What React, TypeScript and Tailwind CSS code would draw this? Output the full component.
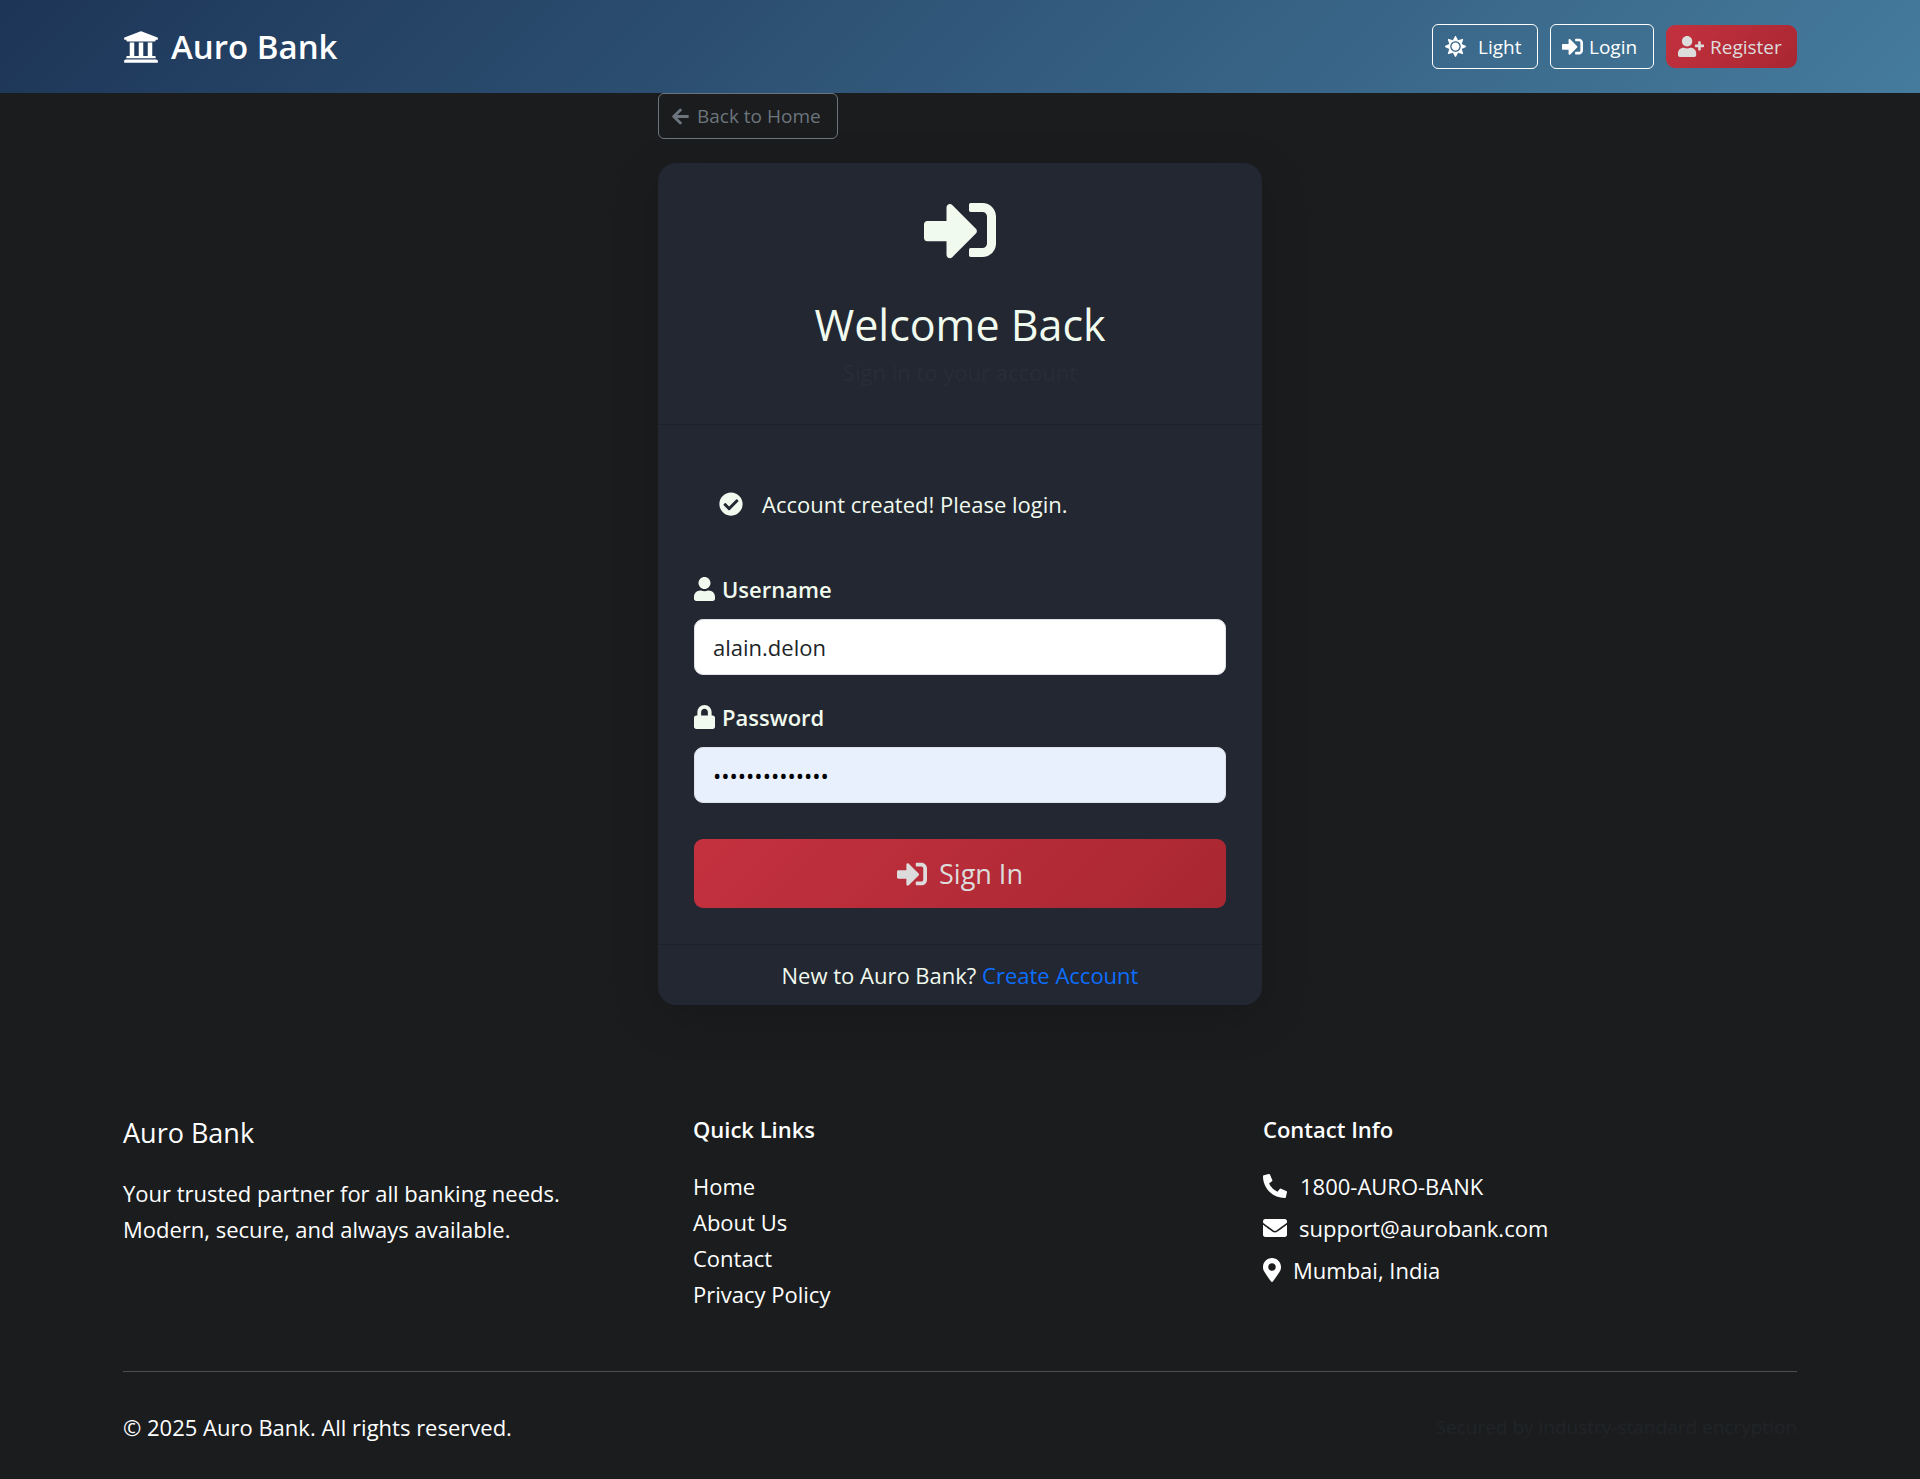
import React from "react";
import { FaUniversity, FaSun, FaSignInAlt, FaUserPlus, FaArrowLeft, FaCheckCircle, FaUser, FaLock, FaPhoneAlt, FaEnvelope, FaMapMarkerAlt } from "react-icons/fa";

export default function App() {
  return (
    <div className="min-h-[1479px] bg-[#1a1c1e] text-white font-['Open_Sans','Noto_Sans',sans-serif] text-[22px] leading-[36px]">
      <nav className="h-[93px] bg-[linear-gradient(135deg,#1d3557,#457b9d)] px-[123px] flex items-center justify-between">
        <a className="flex items-center text-[33px] font-semibold text-white">
          <FaUniversity className="w-[36px] h-[36px] mr-[12px]" />
          <span>Auro Bank</span>
        </a>
        <div className="flex items-center gap-[12px]">
          <button className="h-[45px] w-[106px] border-[1.5px] border-white rounded-[6px] text-[19px] flex items-center pl-[12px]">
            <FaSun className="w-[21px] h-[21px] mr-[12px]" />
            <span>Light</span>
          </button>
          <button className="h-[45px] w-[104px] border-[1.5px] border-white rounded-[6px] text-[19px] flex items-center pl-[11px]">
            <FaSignInAlt className="w-[21px] h-[21px] mr-[6px]" />
            <span>Login</span>
          </button>
          <button className="h-[43px] w-[131px] rounded-[9px] bg-[linear-gradient(135deg,#c4313f,#a82731)] text-[19px] text-[#dcdcdc] flex items-center pl-[12px]">
            <FaUserPlus className="w-[26px] h-[21px] mr-[6px]" />
            <span>Register</span>
          </button>
        </div>
      </nav>

      <main className="w-[604px] mx-auto">
        <button className="h-[46px] w-[180px] border-[1.5px] border-[#6c757d] rounded-[6px] text-[#6c757d] text-[19px] flex items-center pl-[12px]">
          <FaArrowLeft className="w-[19px] h-[19px] mr-[7px]" />
          <span>Back to Home</span>
        </button>

        <section className="mt-[24px] bg-[#222731] rounded-[18px] shadow-[0_12px_48px_rgba(0,0,0,0.15)]">
          <header className="pt-[31px] pb-[34px] text-center border-b border-[#1e2128]">
            <FaSignInAlt className="w-[72px] h-[72px] mx-auto mb-[30px] text-[#f1faee]" />
            <h2 className="text-[43px] leading-[58px] font-medium text-[#f1faee]">Welcome Back</h2>
            <p className="text-[#282d37] text-[22px] leading-[36px]">Sign in to your account</p>
          </header>

          <div className="px-[36px] pt-[36px] pb-[36px]">
            <div className="py-[25px] pl-[25px] flex items-center text-[#f1faee]">
              <FaCheckCircle className="w-[24px] h-[24px] mr-[19px]" />
              <span>Account created! Please login.</span>
            </div>

            <label className="mt-[24px] flex items-center font-semibold text-[#f1faee]">
              <FaUser className="w-[21px] h-[24px] mr-[7px]" />
              <span>Username</span>
            </label>
            <input readOnly value="alain.delon" className="mt-[12px] w-full h-[56px] bg-white rounded-[9px] border border-[#dee2e6] px-[18px] text-[#212529] text-[22px] outline-none" />

            <label className="mt-[24px] flex items-center font-semibold text-[#f1faee]">
              <FaLock className="w-[21px] h-[24px] mr-[7px]" />
              <span>Password</span>
            </label>
            <input readOnly type="password" value="aaaaaaaaaaaaaa" className="mt-[12px] w-full h-[56px] bg-[#e8f0fe] rounded-[9px] border border-[#dee2e6] px-[18px] text-black text-[22px] outline-none" />

            <button className="mt-[36px] w-full h-[69px] rounded-[9px] bg-[linear-gradient(135deg,#c4313f,#a82731)] text-[#dcdcdc] text-[27px] flex items-center justify-center">
              <FaSignInAlt className="w-[30px] h-[30px] mr-[12px]" />
              <span>Sign In</span>
            </button>
          </div>

          <footer className="border-t border-[#1e2128] h-[61px] flex items-center justify-center text-[#f1faee]">
            <span>New to Auro Bank? <a className="text-[#0d6efd] font-medium">Create Account</a></span>
          </footer>
        </section>
      </main>

      <footer className="mt-[110px] px-[123px]">
        <div className="grid grid-cols-[570px_570px_1fr]">
          <div>
            <h5 className="text-[27px] leading-[36px] font-medium">Auro Bank</h5>
            <p className="mt-[24px]">Your trusted partner for all banking needs.<br />Modern, secure, and always available.</p>
          </div>
          <div>
            <h6 className="leading-[29px] font-semibold">Quick Links</h6>
            <ul className="mt-[24px]">
              <li>Home</li>
              <li>About Us</li>
              <li>Contact</li>
              <li>Privacy Policy</li>
            </ul>
          </div>
          <div>
            <h6 className="leading-[29px] font-semibold">Contact Info</h6>
            <ul className="mt-[24px] flex flex-col gap-[6px]">
              <li className="flex items-center"><FaPhoneAlt className="w-[24px] h-[24px] mr-[13px]" />1800-AURO-BANK</li>
              <li className="flex items-center"><FaEnvelope className="w-[24px] h-[24px] mr-[12px]" />support@aurobank.com</li>
              <li className="flex items-center"><FaMapMarkerAlt className="w-[18px] h-[24px] mr-[12px]" />Mumbai, India</li>
            </ul>
          </div>
        </div>
        <div className="mt-[59px] h-px bg-[#4e4f50]" />
        <div className="mt-[37px] pb-[34px] flex justify-between">
          <span>© 2025 Auro Bank. All rights reserved.</span>
          <span className="text-[19px] text-[#212427]">Secured by industry-standard encryption</span>
        </div>
      </footer>
    </div>
  );
}
